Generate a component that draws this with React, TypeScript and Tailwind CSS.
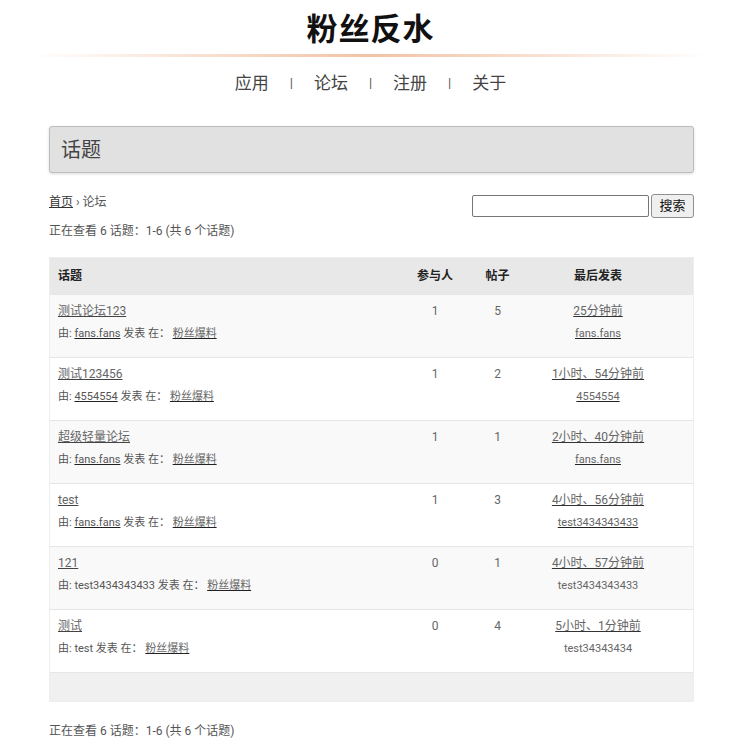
import React from "react";

type Topic = {
  title: string;
  author: string;
  authorLink: boolean;
  voices: number;
  posts: number;
  freshness: string;
  lastBy: string;
};

const topics: Topic[] = [
  { title: "测试论坛123", author: "fans.fans", authorLink: true, voices: 1, posts: 5, freshness: "25分钟前", lastBy: "fans.fans" },
  { title: "测试123456", author: "4554554", authorLink: true, voices: 1, posts: 2, freshness: "1小时、54分钟前", lastBy: "4554554" },
  { title: "超级轻量论坛", author: "fans.fans", authorLink: true, voices: 1, posts: 1, freshness: "2小时、40分钟前", lastBy: "fans.fans" },
  { title: "test", author: "fans.fans", authorLink: true, voices: 1, posts: 3, freshness: "4小时、56分钟前", lastBy: "test3434343433" },
  { title: "121", author: "test3434343433", authorLink: false, voices: 0, posts: 1, freshness: "4小时、57分钟前", lastBy: "test3434343433" },
  { title: "测试", author: "test", authorLink: false, voices: 0, posts: 4, freshness: "5小时、1分钟前", lastBy: "test34343434" },
];

const font = "font-['Roboto','Noto_Sans_CJK_SC',sans-serif]";
const cols = "grid grid-cols-[353px_64px_61px_140px_27px]";

export default function App() {
  return (
    <div className={`${font} bg-white text-[#666] min-h-[755px]`}>
      <header className="pt-[10px] pl-[9px]">
        <h1 className="text-center text-[31px] leading-[40px] font-bold text-[#111] tracking-[1px]">粉丝反水</h1>
        <div className="mx-[22px] mt-[4px] h-[3px] bg-[linear-gradient(to_right,rgba(240,190,160,0),#f2c2a4_50%,rgba(240,190,160,0))]" />
        <nav className="mt-[14px] flex justify-center items-center text-[17px] leading-[24px] text-[#444]">
          <a>应用</a>
          <span className="mx-[21px] text-[13px] text-[#555]">|</span>
          <a>论坛</a>
          <span className="mx-[21px] text-[13px] text-[#555]">|</span>
          <a>注册</a>
          <span className="mx-[21px] text-[13px] text-[#555]">|</span>
          <a>关于</a>
        </nav>
      </header>

      <main className="ml-[49px] w-[645px] mt-[31px]">
        <div className="h-[47px] rounded-[3px] border border-[#bdbdbd] bg-[#e1e1e1] shadow-[0_1px_3px_rgba(0,0,0,0.15)] flex items-center px-[11px]">
          <h2 className="text-[20px] text-[#444]">话题</h2>
        </div>

        <div className="mt-[19px] flex justify-between items-start">
          <div className="text-[12px] leading-[18px] pt-[1px] text-[#555]">
            <a className="underline text-[#333]">首页</a>
            <span>&nbsp;›&nbsp;论坛</span>
          </div>
          <div className="flex items-center gap-[2px] pt-[2px]">
            <input className="w-[177px] h-[22px] border border-[#767676] rounded-[2px] bg-white" />
            <button className="h-[24px] w-[43px] border border-[#8f8f8f] rounded-[3px] bg-[#efefef] text-[13px] text-[#111]">搜索</button>
          </div>
        </div>

        <p className="text-[12px] leading-[18px] mt-[4px] text-[#555]">正在查看 6 话题：1-6 (共 6 个话题)</p>

        <div className="mt-[17px] border border-[#eee]">
          <div className={`${cols} h-[36px] items-center bg-[#e8e8e8] text-[12px] font-bold text-[#222]`}>
            <div className="pl-[8px]">话题</div>
            <div className="text-center">参与人</div>
            <div className="text-center">帖子</div>
            <div className="text-center">最后发表</div>
            <div />
          </div>
          {topics.map((t, i) => (
            <div
              key={i}
              className={`${cols} h-[63px] border-t border-[#e6e6e6] text-[12px] leading-[18px] ${i % 2 === 0 ? "bg-[#f9f9f9]" : "bg-white"}`}
            >
              <div className="pl-[8px] pt-[7px]">
                <a className="underline decoration-[#444]">{t.title}</a>
                <div className="mt-[5px] text-[11px] text-[#555]">
                  由: {t.authorLink ? <a className="underline text-[#555] decoration-[#222]">{t.author}</a> : t.author} 发表 在：{" "}
                  <a className="underline text-[#666] decoration-[#222]">粉丝爆料</a>
                </div>
              </div>
              <div className="text-center pt-[7px]">{t.voices}</div>
              <div className="text-center pt-[7px]">{t.posts}</div>
              <div className="text-center pt-[7px]">
                <a className="underline decoration-[#333]">{t.freshness}</a>
                <div className="mt-[5px] text-[11px]">
                  {i < 4 ? <a className="underline decoration-[#222]">{t.lastBy}</a> : t.lastBy}
                </div>
              </div>
              <div />
            </div>
          ))}
          <div className="h-[29px] border-t border-[#e6e6e6] bg-[#f0f0f0]" />
        </div>

        <p className="text-[12px] leading-[18px] mt-[20px] text-[#555]">正在查看 6 话题：1-6 (共 6 个话题)</p>
      </main>
    </div>
  );
}
